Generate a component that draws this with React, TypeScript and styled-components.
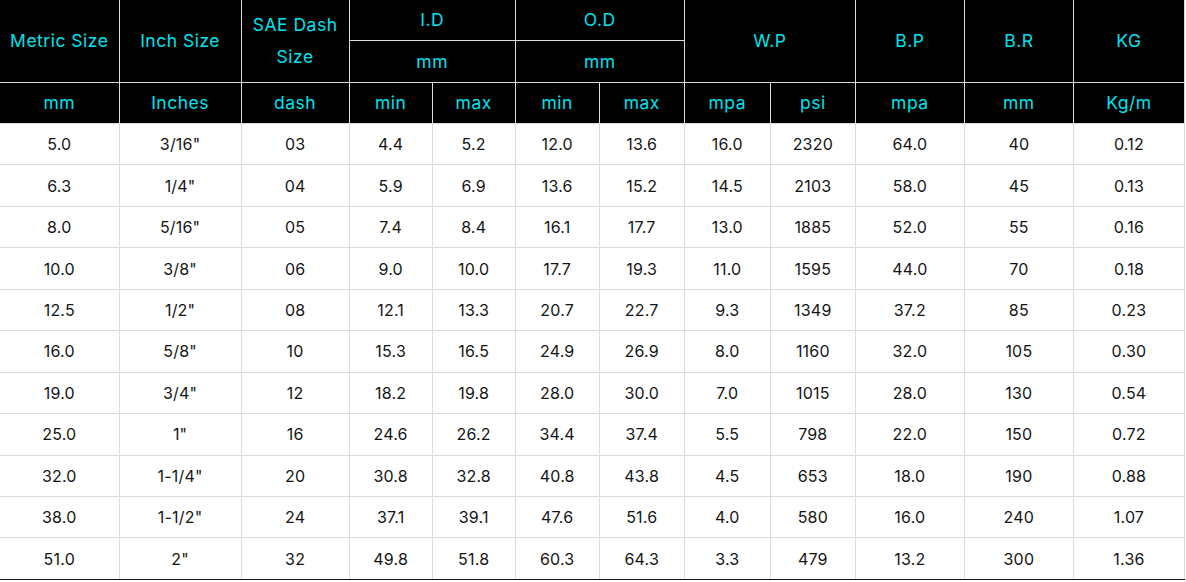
import styled, { createGlobalStyle } from 'styled-components';

const GlobalStyle = createGlobalStyle`
  html, body {
    margin: 0;
    padding: 0;
    background: #ffffff;
  }
`;

const Table = styled.table`
  width: 1185px;
  table-layout: fixed;
  border-collapse: collapse;
  font-family: Inter, 'Noto Sans', sans-serif;
  font-size: 16px;
  text-align: center;
`;

const HeadCell = styled.th<{ $height?: number }>`
  background: #000000;
  color: #00e2ef;
  font-weight: 400;
  font-size: 17.5px;
  letter-spacing: 0.5px;
  border: 1px solid #dcdcdc;
  border-top: none;
  height: ${(p) => p.$height ?? 40}px;
  padding: 0 4px;
  line-height: 32px;
  &:first-child {
    border-left: none;
  }
`;

const Cell = styled.td`
  color: #141414;
  border: 1px solid #dcdcdc;
  height: 40.45px;
  padding: 0;
  letter-spacing: 0.2px;
  &:first-child {
    border-left: none;
  }
  tr:last-child > & {
    border-bottom-color: #1a1a1a;
  }
`;

const widths = [119, 122, 108, 83, 83, 84, 85, 86, 85, 109, 109, 111];

const units = ['mm', 'Inches', 'dash', 'min', 'max', 'min', 'max', 'mpa', 'psi', 'mpa', 'mm', 'Kg/m'];

const rows = [
  ['5.0', '3/16"', '03', '4.4', '5.2', '12.0', '13.6', '16.0', '2320', '64.0', '40', '0.12'],
  ['6.3', '1/4"', '04', '5.9', '6.9', '13.6', '15.2', '14.5', '2103', '58.0', '45', '0.13'],
  ['8.0', '5/16"', '05', '7.4', '8.4', '16.1', '17.7', '13.0', '1885', '52.0', '55', '0.16'],
  ['10.0', '3/8"', '06', '9.0', '10.0', '17.7', '19.3', '11.0', '1595', '44.0', '70', '0.18'],
  ['12.5', '1/2"', '08', '12.1', '13.3', '20.7', '22.7', '9.3', '1349', '37.2', '85', '0.23'],
  ['16.0', '5/8"', '10', '15.3', '16.5', '24.9', '26.9', '8.0', '1160', '32.0', '105', '0.30'],
  ['19.0', '3/4"', '12', '18.2', '19.8', '28.0', '30.0', '7.0', '1015', '28.0', '130', '0.54'],
  ['25.0', '1"', '16', '24.6', '26.2', '34.4', '37.4', '5.5', '798', '22.0', '150', '0.72'],
  ['32.0', '1-1/4"', '20', '30.8', '32.8', '40.8', '43.8', '4.5', '653', '18.0', '190', '0.88'],
  ['38.0', '1-1/2"', '24', '37.1', '39.1', '47.6', '51.6', '4.0', '580', '16.0', '240', '1.07'],
  ['51.0', '2"', '32', '49.8', '51.8', '60.3', '64.3', '3.3', '479', '13.2', '300', '1.36'],
];

export default function App() {
  return (
    <>
      <GlobalStyle />
      <Table>
        <colgroup>
          {widths.map((w, i) => (
            <col key={i} style={{ width: w }} />
          ))}
        </colgroup>
        <thead>
          <tr>
            <HeadCell rowSpan={2}>Metric Size</HeadCell>
            <HeadCell rowSpan={2}>Inch Size</HeadCell>
            <HeadCell rowSpan={2}>SAE Dash Size</HeadCell>
            <HeadCell colSpan={2} $height={40}>I.D</HeadCell>
            <HeadCell colSpan={2} $height={40}>O.D</HeadCell>
            <HeadCell colSpan={2} rowSpan={2}>W.P</HeadCell>
            <HeadCell rowSpan={2}>B.P</HeadCell>
            <HeadCell rowSpan={2}>B.R</HeadCell>
            <HeadCell rowSpan={2}>KG</HeadCell>
          </tr>
          <tr>
            <HeadCell colSpan={2} $height={41}>mm</HeadCell>
            <HeadCell colSpan={2} $height={41}>mm</HeadCell>
          </tr>
          <tr>
            {units.map((u, i) => (
              <HeadCell key={i} $height={40}>
                {u}
              </HeadCell>
            ))}
          </tr>
        </thead>
        <tbody>
          {rows.map((r, i) => (
            <tr key={i}>
              {r.map((v, j) => (
                <Cell key={j}>{v}</Cell>
              ))}
            </tr>
          ))}
        </tbody>
      </Table>
    </>
  );
}
